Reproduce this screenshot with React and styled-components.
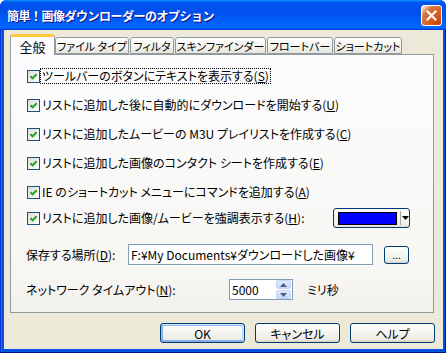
import styled, { createGlobalStyle } from "styled-components";

const GlobalStyle = createGlobalStyle`
  html, body {
    margin: 0;
    padding: 0;
    background: #ffffff;
  }
  body {
    font-family: "Noto Sans CJK JP", "Noto Sans", sans-serif;
    font-size: 12px;
    color: #000;
  }
`;

const Window = styled.div`
  width: 446px;
  height: 353px;
  box-sizing: border-box;
  display: flex;
  flex-direction: column;
  background: #0054e3;
  border-radius: 7px 7px 0 0;
  overflow: hidden;
  box-shadow: inset -1px -1px #00138c, inset 1px 1px #0831d9,
    inset 2px 2px #166aee, inset 3px 3px #0855dd;
`;

const TitleBar = styled.div`
  height: 30px;
  flex: none;
  display: flex;
  align-items: center;
  padding: 0 4px 0 7px;
  background: linear-gradient(
    180deg,
    #0997ff,
    #0053ee 8%,
    #0050ee 40%,
    #0066ff 88%,
    #0066ff 93%,
    #005bff 95%,
    #003dd7 96%,
    #003dd7
  );
`;

const Title = styled.div`
  flex: 1;
  color: #fff;
  font-weight: 700;
  font-size: 12px;
  letter-spacing: -0.5px;
  text-shadow: 1px 1px #0f1089;
  white-space: nowrap;
`;

const CloseButton = styled.div`
  width: 21px;
  height: 21px;
  box-sizing: border-box;
  border: 1px solid #fff;
  border-radius: 3px;
  background: radial-gradient(
    circle at 90% 90%,
    #cc4600 0%,
    #dc6527 55%,
    #cd7546 70%,
    #ffccb2 90%,
    #fff 100%
  );
  display: flex;
  align-items: center;
  justify-content: center;
`;

const Body = styled.div`
  flex: 1;
  margin: 0 3px 4px 4px;
  background: #ece9d8;
  display: flex;
  flex-direction: column;
  padding: 4px 9px 6px 6px;
`;

const TabRow = styled.div`
  display: flex;
  align-items: flex-end;
  height: 20px;
  flex: none;
`;

const Tab = styled.div`
  position: relative;
  box-sizing: border-box;
  width: ${(p) => p.$w}px;
  height: ${(p) => (p.$active ? 21 : 17)}px;
  margin-bottom: ${(p) => (p.$active ? -1 : 0)}px;
  z-index: ${(p) => (p.$active ? 2 : 0)};
  margin-right: ${(p) => (p.$active ? 0 : 1)}px;
  border: 1px solid #919b9c;
  border-bottom: ${(p) => (p.$active ? "none" : "1px solid #919b9c")};
  border-radius: 3px 3px 0 0;
  background: ${(p) =>
    p.$active
      ? "#fcfcfe"
      : "linear-gradient(180deg, #ffffff, #f3f3ef 60%, #e6e5dd)"};
  border-top: ${(p) => (p.$active ? "3px solid #ffc83c" : "1px solid #919b9c")};
  display: flex;
  align-items: center;
  justify-content: center;
  font-size: ${(p) => (p.$active ? 13 : 11)}px;
  font-feature-settings: "palt";
  white-space: nowrap;
  padding-top: ${(p) => (p.$active ? 0 : 1)}px;
`;

const Panel = styled.div`
  height: 259px;
  flex: none;
  box-sizing: border-box;
  border: 1px solid #919b9c;
  background: linear-gradient(180deg, #fcfcfe, #f7f6f2 85%, #f1f0eb);
  display: flex;
  flex-direction: column;
  padding: 11px 23px 0 16px;
`;

const Row = styled.div`
  display: flex;
  align-items: center;
  height: ${(p) => p.$h || 20}px;
  margin-top: ${(p) => p.$mt || 0}px;
  white-space: nowrap;
  font-feature-settings: "palt";
`;

const Box = styled.div`
  width: 13px;
  height: 13px;
  box-sizing: border-box;
  border: 1px solid #1c5180;
  background: linear-gradient(135deg, #dcdcd7, #ffffff);
  display: flex;
  align-items: center;
  justify-content: center;
  flex: none;
`;

const CheckLabel = styled.span`
  margin-left: 1px;
  padding: 0 1px;
  line-height: 14px;
  outline: ${(p) => (p.$focus ? "1px dotted #000" : "none")};
`;

const U = styled.span`
  text-decoration: underline;
  text-underline-offset: 1px;
`;

const ColorPicker = styled.div`
  margin-left: auto;
  width: 77px;
  height: 20px;
  box-sizing: border-box;
  border: 1px solid #003c74;
  border-radius: 3px;
  background: linear-gradient(180deg, #ffffff, #f0efea 80%, #e3e0d6);
  display: flex;
  align-items: center;
  padding: 0 0 0 4px;
`;

const Swatch = styled.div`
  width: 59px;
  height: 13px;
  box-sizing: border-box;
  border: 1px solid #000;
  background: #0000ff;
`;

const PickerArrow = styled.div`
  flex: 1;
  height: 14px;
  margin-left: 3px;
  border-left: 1px solid #a7a6aa;
  display: flex;
  align-items: center;
  justify-content: center;
`;

const FieldLabel = styled.span`
  width: ${(p) => p.$w}px;
  flex: none;
  margin-left: -1px;
`;

const TextBox = styled.div`
  box-sizing: border-box;
  width: ${(p) => p.$w}px;
  height: 21px;
  border: 1px solid #7f9db9;
  background: #fff;
  display: flex;
  align-items: center;
  padding-left: 2px;
  flex: none;
`;

const SmallButton = styled.div`
  box-sizing: border-box;
  width: 25px;
  height: 18px;
  margin-left: 11px;
  border: 1px solid #003c74;
  border-radius: 3px;
  background: linear-gradient(180deg, #ffffff, #ecebe6 86%, #d6d0c5);
  display: flex;
  align-items: flex-end;
  justify-content: center;
  padding-bottom: 3px;
  font-size: 10px;
  line-height: 10px;
`;

const Spinner = styled(TextBox)`
  padding-right: 1px;
  justify-content: space-between;
`;

const SpinButtons = styled.div`
  width: 15px;
  height: 19px;
  display: flex;
  flex-direction: column;
  gap: 1px;
`;

const SpinButton = styled.div`
  flex: 1;
  border-radius: 2px;
  border: 1px solid #c6d3f7;
  background: linear-gradient(180deg, #e4ecfd, #c5d5fa);
  display: flex;
  align-items: center;
  justify-content: center;
`;

const Unit = styled.span`
  margin-left: 14px;
`;

const ButtonRow = styled.div`
  display: flex;
  justify-content: flex-end;
  gap: 10px;
  margin-top: 10px;
  margin-right: -1px;
`;

const Button = styled.div`
  box-sizing: border-box;
  width: 85px;
  height: 20px;
  border: 1px solid #003c74;
  border-radius: 3px;
  background: linear-gradient(180deg, #ffffff, #ecebe6 86%, #d6d0c5);
  display: flex;
  align-items: center;
  justify-content: center;
  font-feature-settings: "palt";
  box-shadow: ${(p) =>
    p.$default
      ? "inset -1px 1px #cee7ff, inset 1px 2px #98b8ea, inset -2px 2px #bcd4f6, inset 1px -1px #89ade4, inset 2px -2px #89ade4"
      : "none"};
`;

const Check = () => (
  <Box>
    <svg width="9" height="9" viewBox="0 0 9 9">
      <path d="M1.5 4.2 L3.6 6.4 L7.6 2.2" fill="none" stroke="#21a121" strokeWidth="2" />
    </svg>
  </Box>
);

const tabs = [
  ["全般", 45],
  ["ファイル タイプ", 74],
  ["フィルタ", 44],
  ["スキンファインダー", 91],
  ["フロートバー", 66],
  ["ショートカット", 68],
];

const options = [
  ["ツールバーのボタンにテキストを表示する", "S", 0],
  ["リストに追加した後に自動的にダウンロードを開始する", "U", 9],
  ["リストに追加したムービーの M3U プレイリストを作成する", "C", 9],
  ["リストに追加した画像のコンタクト シートを作成する", "E", 9],
  ["IE のショートカット メニューにコマンドを追加する", "A", 9],
];

export default function App() {
  return (
    <>
      <GlobalStyle />
      <Window>
        <TitleBar>
          <Title>簡単！画像ダウンローダーのオプション</Title>
          <CloseButton>
            <svg width="13" height="13" viewBox="0 0 13 13">
              <path d="M2.5 2.5 L10.5 10.5 M10.5 2.5 L2.5 10.5" stroke="#fff" strokeWidth="2.2" strokeLinecap="square" />
            </svg>
          </CloseButton>
        </TitleBar>
        <Body>
          <TabRow>
            {tabs.map(([t, w], i) => (
              <Tab key={t} $w={w} $active={i === 0}>
                {t}
              </Tab>
            ))}
          </TabRow>
          <Panel>
            {options.map(([text, key, mt], i) => (
              <Row key={key} $mt={mt}>
                <Check />
                <CheckLabel $focus={i === 0}>
                  {text}(<U>{key}</U>)
                </CheckLabel>
              </Row>
            ))}
            <Row $mt={6}>
              <Check />
              <CheckLabel>
                リストに追加した画像/ムービーを強調表示する(<U>H</U>):
              </CheckLabel>
              <ColorPicker>
                <Swatch />
                <PickerArrow>
                  <svg width="7" height="4" viewBox="0 0 7 4">
                    <path d="M0 0 H7 L3.5 4 Z" fill="#000" />
                  </svg>
                </PickerArrow>
              </ColorPicker>
            </Row>
            <Row $mt={16} $h={21}>
              <FieldLabel $w={102}>
                保存する場所(<U>D</U>):
              </FieldLabel>
              <TextBox $w={245}>F:¥My Documents¥ダウンロードした画像¥</TextBox>
              <SmallButton>...</SmallButton>
            </Row>
            <Row $mt={14} $h={21}>
              <FieldLabel $w={203}>
                ネットワーク タイムアウト(<U>N</U>):
              </FieldLabel>
              <Spinner $w={64}>
                <span>5000</span>
                <SpinButtons>
                  <SpinButton>
                    <svg width="7" height="4" viewBox="0 0 7 4">
                      <path d="M0 4 L3.5 0 L7 4 Z" fill="#4d6185" />
                    </svg>
                  </SpinButton>
                  <SpinButton>
                    <svg width="7" height="4" viewBox="0 0 7 4">
                      <path d="M0 0 H7 L3.5 4 Z" fill="#4d6185" />
                    </svg>
                  </SpinButton>
                </SpinButtons>
              </Spinner>
              <Unit>ミリ秒</Unit>
            </Row>
          </Panel>
          <ButtonRow>
            <Button $default>OK</Button>
            <Button>キャンセル</Button>
            <Button>ヘルプ</Button>
          </ButtonRow>
        </Body>
      </Window>
    </>
  );
}
